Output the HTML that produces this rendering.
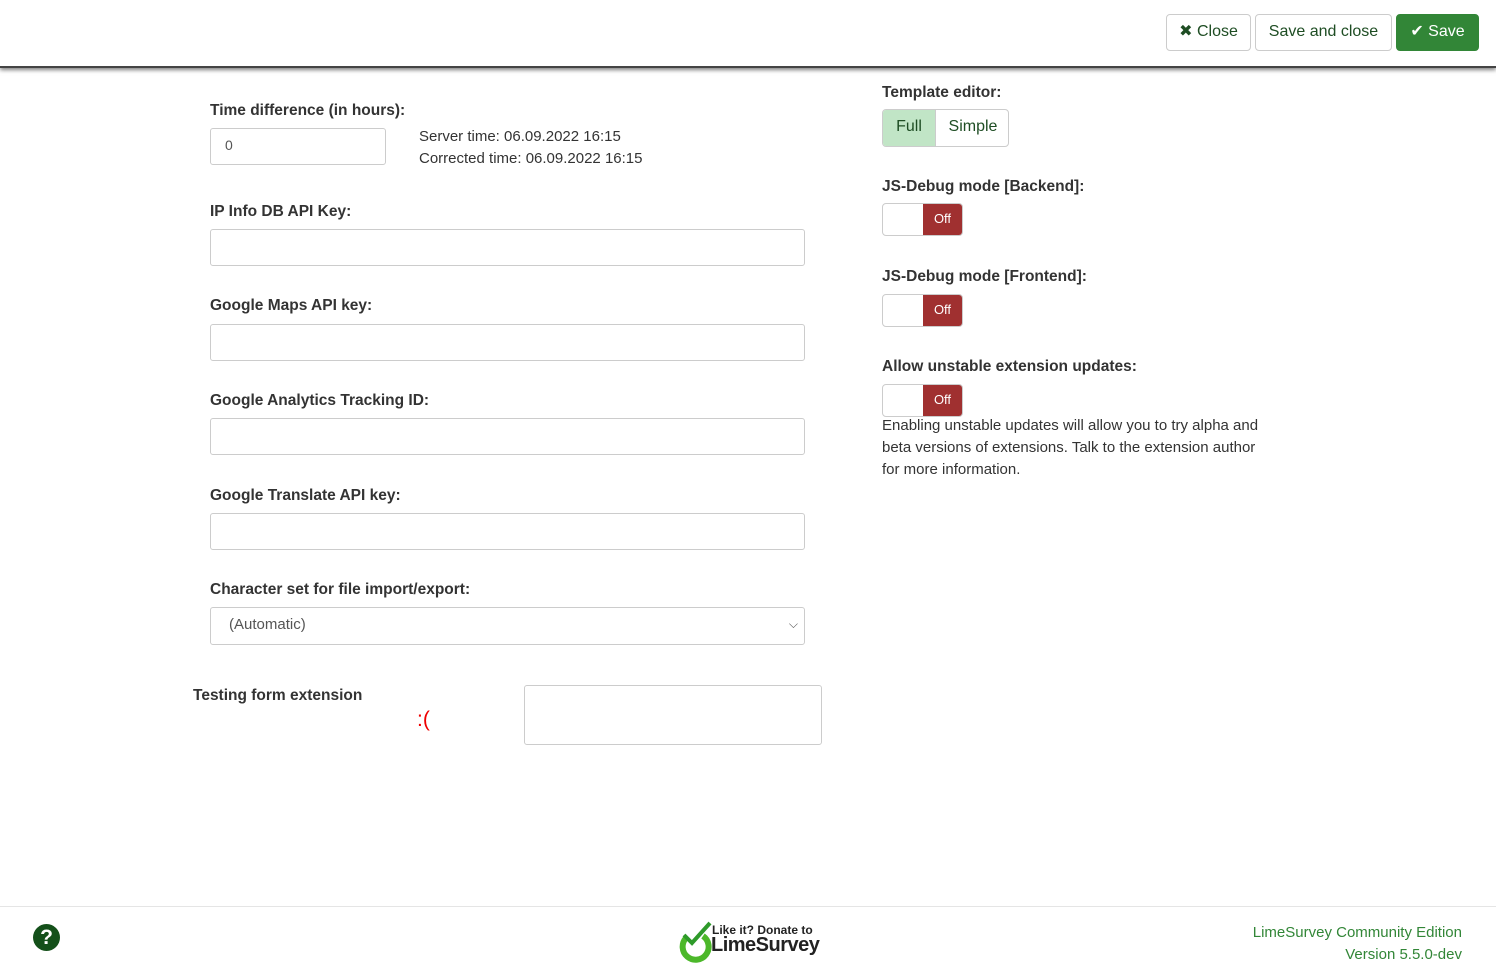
<!DOCTYPE html>
<html><head><meta charset="utf-8"><style>
body{margin:0;width:1496px;height:972px;background:#fff;font-family:"Liberation Sans",sans-serif;color:#333;position:relative;overflow:hidden}
.a{position:absolute}
.top{left:0;top:0;width:1496px;height:66px;background:#fff;border-bottom:2px solid #444;box-shadow:0 2px 4px rgba(0,0,0,.5)}
.btn{position:absolute;top:14px;height:37px;border:1px solid #ccc;border-radius:4px;box-sizing:border-box;font-size:16px;color:#1e4d23;line-height:34px;text-align:center;background:#fff}
.lbl{position:absolute;font-weight:bold;font-size:15.5px;color:#333}
.inp{position:absolute;border:1px solid #ccc;border-radius:3px;box-sizing:border-box;background:#fff}
.tog{position:absolute;width:81px;height:33px;border:1px solid #ccc;border-radius:4px;box-sizing:border-box;overflow:hidden}
.tog span{position:absolute;right:0;top:0;width:39px;height:31px;background:#a03030;color:#fff;font-size:13px;line-height:29px;text-align:center}
.txt{position:absolute;font-size:15px;color:#333}
</style></head><body>
<div class="a top"></div>
<div class="btn" style="left:1166px;width:85px">✖ Close</div>
<div class="btn" style="left:1255px;width:137px">Save and close</div>
<div class="btn" style="left:1396px;width:83px;background:#328637;border-color:#328637;color:#fff">✔ Save</div>

<div class="lbl" style="left:210px;top:102px">Time difference (in hours):</div>
<div class="inp" style="left:210px;top:128px;width:176px;height:37px;font-size:14px;line-height:33px;padding-left:14px;color:#555">0</div>
<div class="txt" style="left:419px;top:126px;line-height:22px">Server time: 06.09.2022 16:15<br>Corrected time: 06.09.2022 16:15</div>

<div class="lbl" style="left:210px;top:203px">IP Info DB API Key:</div>
<div class="inp" style="left:210px;top:229px;width:595px;height:37px"></div>
<div class="lbl" style="left:210px;top:297px">Google Maps API key:</div>
<div class="inp" style="left:210px;top:324px;width:595px;height:37px"></div>
<div class="lbl" style="left:210px;top:392px">Google Analytics Tracking ID:</div>
<div class="inp" style="left:210px;top:418px;width:595px;height:37px"></div>
<div class="lbl" style="left:210px;top:487px">Google Translate API key:</div>
<div class="inp" style="left:210px;top:513px;width:595px;height:37px"></div>
<div class="lbl" style="left:210px;top:581px">Character set for file import/export:</div>
<div class="inp" style="left:210px;top:607px;width:595px;height:38px;font-size:15px;line-height:33px;padding-left:18px;color:#555">(Automatic)<span style="position:absolute;right:6px;top:0;font-size:12px">⌵</span></div>

<div class="lbl" style="left:193px;top:687px">Testing form extension</div>
<div class="a" style="left:417px;top:708px;color:#e00;font-size:21px">:(</div>
<div class="inp" style="left:524px;top:685px;width:298px;height:60px"></div>

<div class="lbl" style="left:882px;top:84px">Template editor:</div>
<div class="a" style="left:882px;top:109px;width:127px;height:38px;border:1px solid #ccc;border-radius:4px;box-sizing:border-box;overflow:hidden;font-size:16px;color:#1e4d23;line-height:34px">
<div class="a" style="left:0;top:0;width:52px;height:36px;background:#c1e5c6;text-align:center">Full</div>
<div class="a" style="left:52px;top:0;width:74px;height:36px;border-left:1px solid #ccc;text-align:center">Simple</div></div>

<div class="lbl" style="left:882px;top:178px">JS-Debug mode [Backend]:</div>
<div class="tog" style="left:882px;top:203px"><span>Off</span></div>
<div class="lbl" style="left:882px;top:268px">JS-Debug mode [Frontend]:</div>
<div class="tog" style="left:882px;top:294px"><span>Off</span></div>
<div class="lbl" style="left:882px;top:358px">Allow unstable extension updates:</div>
<div class="tog" style="left:882px;top:384px"><span>Off</span></div>
<div class="txt" style="left:882px;top:415px;line-height:22px;width:400px">Enabling unstable updates will allow you to try alpha and<br>beta versions of extensions. Talk to the extension author<br>for more information.</div>

<div class="a" style="left:0;top:906px;width:1496px;border-top:1px solid #e5e5e5"></div>
<div class="a" style="left:33px;top:924px;width:27px;height:27px;border-radius:50%;background:#14501a;color:#fff;font-weight:bold;font-size:21px;text-align:center;line-height:27px">?</div>
<svg class="a" style="left:676px;top:921px" width="44" height="42" viewBox="0 0 44 42"><path d="M10 17 A13 13 0 1 0 27 15" fill="none" stroke="#4cb82a" stroke-width="6"/><path d="M8 14 L16 22 L34 2" fill="none" stroke="#2e9a2a" stroke-width="4"/></svg>
<div class="a" style="left:712px;top:923px;font-weight:bold;font-size:12px;color:#222">Like it? Donate to</div>
<div class="a" style="left:711px;top:934px;font-size:20px;color:#222;font-weight:bold;letter-spacing:-0.5px">LimeSurvey</div>
<div class="a" style="right:34px;top:922px;text-align:right;color:#328637;font-size:15px;line-height:22px">LimeSurvey Community Edition<br>Version 5.5.0-dev</div>
</body></html>
